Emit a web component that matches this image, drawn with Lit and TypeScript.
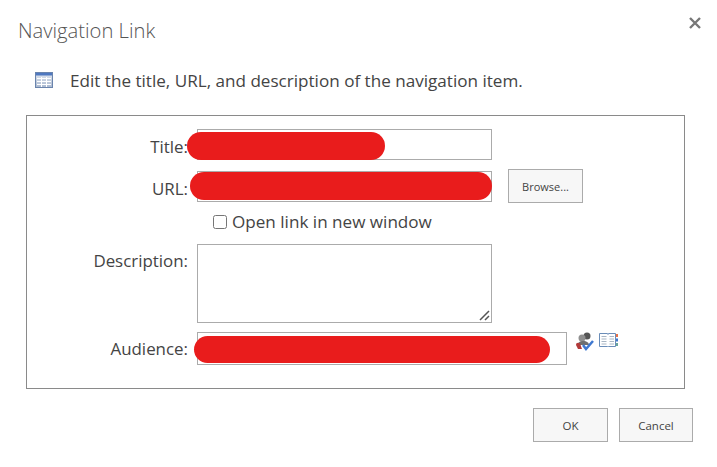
import { LitElement, html, css } from 'lit';
import { customElement } from 'lit/decorators.js';

@customElement('app-root')
export class AppRoot extends LitElement {
  static styles = css`
    :host {
      display: block;
      width: 717px;
      height: 467px;
      background: #fff;
      font-family: 'Open Sans', 'Liberation Sans', sans-serif;
      color: #444;
      overflow: hidden;
    }
    .head {
      display: flex;
      justify-content: space-between;
      align-items: center;
      padding: 15px 16px 1px 18px;
      height: 29px;
    }
    .title {
      font-size: 20.2px;
      font-weight: 300;
      color: #555;
    }
    .close { width: 12px; height: 12px; display: block; margin-top: -14px; }
    .intro {
      display: flex;
      align-items: center;
      gap: 17px;
      padding: 18px 0 0 35px;
      height: 34px;
      font-size: 17.1px;
      color: #444;
    }
    .panel {
      box-sizing: border-box;
      margin: 18px 32px 0 26px;
      height: 274px;
      border: 1px solid #8a8a8a;
      padding: 13px 0 0;
      display: grid;
      grid-template-columns: 161px 1fr;
      column-gap: 9px;
      align-content: start;
    }
    .label {
      font-size: 16.9px;
      text-align: right;
      height: 31px;
      line-height: 35px;
    }
    .field { display: flex; align-items: flex-start; position: relative; }
    .input {
      box-sizing: border-box;
      width: 295px;
      height: 31px;
      border: 1px solid #ababab;
      background: #fff;
    }
    .row-url { margin-top: 11px; }
    .row-desc-label { margin-top: 11px; }
    .row-desc { margin-top: 12px; }
    .row-aud-label { margin-top: 8px; }
    .row-aud { margin-top: 9px; }
    .pill {
      position: absolute;
      background: #e91c1c;
      border-radius: 15px;
    }
    .pill-title { left: -10px; top: 3px; width: 198px; height: 28px; }
    .pill-url { left: -7px; top: 1px; width: 302px; height: 28px; }
    .pill-aud { left: -3px; top: 4px; width: 356px; height: 27px; }
    .browse { margin: -2px 0 0 16px; }
    .btn {
      box-sizing: border-box;
      width: 75px;
      height: 34px;
      border: 1px solid #ababab;
      background: #f7f7f7;
      color: #444;
      font-family: inherit;
      font-size: 11px;
      display: flex;
      align-items: center;
      justify-content: center;
    }
    .check {
      grid-column: 2;
      display: flex;
      align-items: center;
      gap: 5px;
      height: 21px;
      margin-top: 8px;
      padding-left: 16px;
      font-size: 17.1px;
    }
    .box {
      box-sizing: border-box;
      width: 14px;
      height: 14px;
      border: 1px solid #767676;
      border-radius: 2.5px;
      background: #fff;
    }
    .textarea {
      box-sizing: border-box;
      width: 295px;
      height: 79px;
      border: 1px solid #ababab;
      position: relative;
    }
    .grip { position: absolute; right: 1px; bottom: 1px; width: 11px; height: 11px; display: block; }
    .audience { width: 370px; height: 33px; }
    .people { margin: 0 0 0 8px; display: flex; gap: 4px; align-items: flex-start; }
    .people svg { display: block; }
    .foot {
      display: flex;
      justify-content: flex-end;
      gap: 11px;
      margin: 19px 24px 0 0;
    }
    .foot .btn { font-size: 11.5px; }
    .foot .cancel { width: 74px; }
  `;

  render() {
    return html`
      <div class="head">
        <div class="title">Navigation Link</div>
        <svg class="close" viewBox="0 0 12 12">
          <path d="M1 1L11 11M11 1L1 11" stroke="#777" stroke-width="2.4" fill="none" />
        </svg>
      </div>
      <div class="intro">
        <svg width="18" height="16" viewBox="0 0 18 16">
          <defs>
            <linearGradient id="tbl" x1="0" y1="0" x2="0" y2="1">
              <stop offset="0" stop-color="#e4e9f1" />
              <stop offset="1" stop-color="#a9b8cf" />
            </linearGradient>
          </defs>
          <rect x="0.5" y="0.5" width="17" height="15" fill="url(#tbl)" stroke="#6a84ad" />
          <rect x="1" y="1" width="16" height="2.500" fill="#4f78c0" />
          <path d="M2 6.500H16M2 9.500H16M2 12.500H16M6.500 5V15M11.500 5V15" stroke="#fff" fill="none" />
        </svg>
        <span>Edit the title, URL, and description of the navigation item.</span>
      </div>

      <div class="panel">
        <div class="label">Title:</div>
        <div class="field">
          <div class="input"></div>
          <div class="pill pill-title"></div>
        </div>

        <div class="label row-url">URL:</div>
        <div class="field row-url">
          <div class="input"></div>
          <div class="pill pill-url"></div>
          <div class="btn browse">Browse...</div>
        </div>

        <div class="check"><span class="box"></span>Open link in new window</div>

        <div class="label row-desc-label">Description:</div>
        <div class="field row-desc">
          <div class="textarea">
            <svg class="grip" viewBox="0 0 11 11">
              <path d="M1 10L10 1M6 10L10 6" stroke="#555" stroke-width="1.500" fill="none" />
            </svg>
          </div>
        </div>

        <div class="label row-aud-label">Audience:</div>
        <div class="field row-aud">
          <div class="input audience"></div>
          <div class="pill pill-aud"></div>
          <div class="people">
            <svg width="20" height="19" viewBox="0 0 20 19">
              <circle cx="12" cy="4" r="3.500" fill="#555" />
              <circle cx="7" cy="6" r="3.500" fill="#8f8f8f" />
              <path d="M3 13C3 10 5 9 8 9C12 9 14 11 14 13Z" fill="#6f6f6f" />
              <path d="M1 13C1 11 3 10 5 11.500L7 17H3Z" fill="#b23a3a" />
              <path d="M8 13L11 17L18 9" stroke="#3f78d0" stroke-width="2.500" fill="none" />
            </svg>
            <svg width="19" height="16" viewBox="0 0 19 16">
              <path d="M0.500 1.500H8.500L9 2.500L9.500 1.500H16.500V14.500H9.500L9 15L8.500 14.500H0.500Z" fill="#fff" stroke="#6a8db8" />
              <path d="M2.500 4.500H7.500M2.500 7H7.500M2.500 9.500H7.500M2.500 12H7.500M10.500 4.500H15M10.500 7H15M10.500 9.500H15M10.500 12H15" stroke="#a9b6c4" fill="none" />
              <rect x="17" y="2" width="2" height="3" fill="#e8734a" />
              <rect x="17" y="6.500" width="2" height="3" fill="#3f78d0" />
              <rect x="17" y="11" width="2" height="3" fill="#6aa59b" />
            </svg>
          </div>
        </div>
      </div>

      <div class="foot">
        <div class="btn">OK</div>
        <div class="btn cancel">Cancel</div>
      </div>
    `;
  }
}
